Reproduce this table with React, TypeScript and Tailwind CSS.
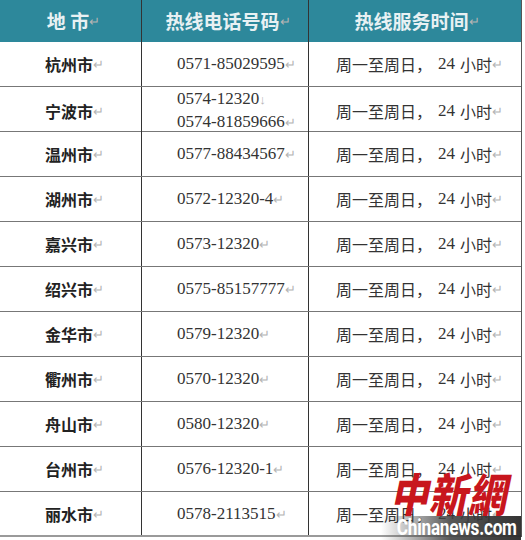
const ROWS: { city: string; phones: string[] }[] = [
  { city: '杭州市', phones: ['0571-85029595'] },
  { city: '宁波市', phones: ['0574-12320', '0574-81859666'] },
  { city: '温州市', phones: ['0577-88434567'] },
  { city: '湖州市', phones: ['0572-12320-4'] },
  { city: '嘉兴市', phones: ['0573-12320'] },
  { city: '绍兴市', phones: ['0575-85157777'] },
  { city: '金华市', phones: ['0579-12320'] },
  { city: '衢州市', phones: ['0570-12320'] },
  { city: '舟山市', phones: ['0580-12320'] },
  { city: '台州市', phones: ['0576-12320-1'] },
  { city: '丽水市', phones: ['0578-2113515'] },
]

const CJK = "font-['Noto_Sans_CJK_SC',sans-serif]"
const SERIF = "font-['Liberation_Serif','Noto_Sans_CJK_SC',serif]"

function Mark({ down }: { down?: boolean }) {
  return <span className="text-[13px] font-normal text-[#b4b4b4]">{down ? '↓' : '↵'}</span>
}

export default function App() {
  return (
    <div className="relative h-[540px] w-[525px] overflow-hidden bg-white">
      <div className="w-[522px] border-r border-[#555]">
        {/* header */}
        <div className="grid h-[42px] grid-cols-[142px_167px_1fr] bg-[#2d889b] text-[19px] font-semibold text-[#e8f1f3]">
          <div className={`flex items-center justify-center border-r border-[#333] pl-[6px] ${CJK}`}>
            地 市<Mark />
          </div>
          <div className={`flex items-center justify-center border-r border-[#333] pl-[6px] ${CJK}`}>
            热线电话号码<Mark />
          </div>
          <div className={`flex items-center justify-center pl-[4px] ${CJK}`}>
            热线服务时间<Mark />
          </div>
        </div>

        {ROWS.map((r, i) => (
          <div
            key={r.city}
            className={`grid h-[45px] grid-cols-[142px_167px_1fr] ${
              i === ROWS.length - 1 ? 'border-b-2 border-[#9a9a9a]' : 'border-b border-[#777]'
            }`}
          >
            <div
              className={`flex items-center justify-center border-r border-[#333] pl-[8px] text-[16px] font-bold text-[#222] ${CJK}`}
            >
              {r.city}
              <Mark />
            </div>
            <div
              className={`flex flex-col justify-center border-r border-[#333] pl-[35px] pt-[1px] text-[17px] leading-[22px] text-[#333] ${SERIF}`}
            >
              {r.phones.map((p, j) => (
                <div key={p}>
                  {p}
                  <Mark down={j < r.phones.length - 1} />
                </div>
              ))}
            </div>
            <div className={`flex items-center pl-[27px] text-[16px] text-[#333] ${CJK}`}>
              周一至周日，<span className={`ml-[6px] mr-[5px] text-[17px] ${SERIF}`}>24</span>小时<Mark />
            </div>
          </div>
        ))}
      </div>

      {/* watermark */}
      <div className="absolute bottom-[24px] right-[18px] origin-bottom scale-y-[1.2] text-[38px] leading-none font-black italic tracking-[1px] text-[#c8161d] font-['Noto_Sans_CJK_TC',serif]">
        中新網
      </div>
      <div className="absolute bottom-0 right-[4px] flex h-[24px] w-[140px] items-center justify-end bg-gradient-to-r from-transparent via-[#444]/90 to-[#2a2a2a]/95 pr-[4px]">
        <span className="inline-block origin-right scale-x-[0.78] whitespace-nowrap text-[22px] leading-none font-bold tracking-[-0.3px] text-white font-['Roboto',sans-serif]">
          Chinanews.com
        </span>
      </div>
    </div>
  )
}
